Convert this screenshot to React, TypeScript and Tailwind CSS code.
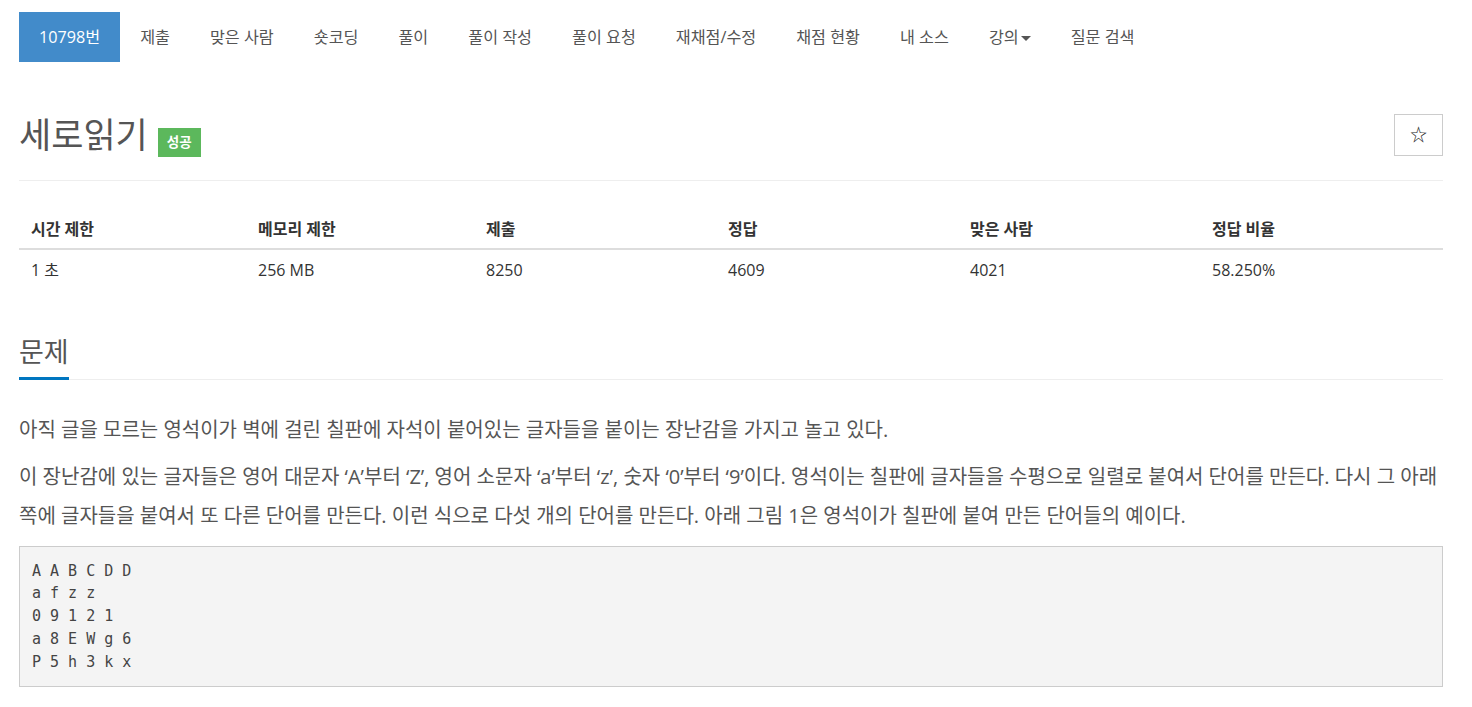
import React from 'react';

const tabs = ['제출', '맞은 사람', '숏코딩', '풀이', '풀이 작성', '풀이 요청', '재채점/수정', '채점 현황', '내 소스'];

const stats = [
  { label: '시간 제한', value: '1 초', w: 'w-[227px]' },
  { label: '메모리 제한', value: '256 MB', w: 'w-[228px]' },
  { label: '제출', value: '8250', w: 'w-[242px]' },
  { label: '정답', value: '4609', w: 'w-[242px]' },
  { label: '맞은 사람', value: '4021', w: 'w-[242px]' },
  { label: '정답 비율', value: '58.250%', w: 'flex-1' },
];

const board = ['A A B C D D', 'a f z z', '0 9 1 2 1', 'a 8 E W g 6', 'P 5 h 3 k x'];

export default function App() {
  return (
    <div className="min-h-screen bg-white text-[#555] font-['Open_Sans','Noto_Sans_CJK_KR',sans-serif]">
      <div className="ml-[19px] w-[1424px]">
        {/* Problem menu */}
        <ul className="mt-[12px] flex h-[50px] text-[16.2px]">
          <li className="flex items-center bg-[#428bca] px-5 text-white">10798번</li>
          {tabs.map((t) => (
            <li key={t} className="flex items-center px-5">{t}</li>
          ))}
          <li className="flex items-center px-5">
            강의
            <span className="ml-[2px] mt-[2px] border-x-[5px] border-t-[5px] border-x-transparent border-t-[#555]" />
          </li>
          <li className="flex items-center px-5">질문 검색</li>
        </ul>

        {/* Title */}
        <div className="mt-[51px] flex items-center justify-between border-b border-[#eee] pb-[23px]">
          <div className="flex items-center">
            <h1 className="text-[35px] leading-[42px] text-[#555]">세로읽기</h1>
            <span className="ml-[10px] mt-[15px] flex h-[29px] items-center bg-[#5cb85c] px-[9px] text-[13.5px] font-bold text-white">
              성공
            </span>
          </div>
          <button className="flex h-[42px] w-[49px] items-center justify-center border border-[#ccc] bg-white text-[17px] text-[#222]">
            ☆
          </button>
        </div>

        {/* Limits table */}
        <div className="mt-[27px] text-[16px]">
          <div className="flex h-[42px] items-center border-b-2 border-[#ddd] pt-[1px] font-bold text-[#333]">
            {stats.map((s) => (
              <div key={s.label} className={`${s.w} px-3`}>{s.label}</div>
            ))}
          </div>
          <div className="flex h-[39px] items-center text-[#333]">
            {stats.map((s) => (
              <div key={s.label} className={`${s.w} px-3`}>{s.value}</div>
            ))}
          </div>
        </div>

        {/* Problem section */}
        <div className="mt-[45px] border-b border-[#eee]">
          <h2 className="mb-[-1px] inline-block border-b-[3px] border-[#0076c0] pb-[7px] text-[27px] leading-[36px] text-[#555]">
            문제
          </h2>
        </div>

        <div className="mt-[30px] text-[20px] leading-[39px]">
          <p className="mb-[8px]">아직 글을 모르는 영석이가 벽에 걸린 칠판에 자석이 붙어있는 글자들을 붙이는 장난감을 가지고 놀고 있다.</p>
          <p className="mb-[11px]">
            이 장난감에 있는 글자들은 영어 대문자 ‘A’부터 ‘Z’, 영어 소문자 ‘a’부터 ‘z’, 숫자 ‘0’부터 ‘9’이다. 영석이는 칠판에 글자들을 수평으로 일렬로 붙여서 단어를 만든다. 다시 그 아래 쪽에 글자들을 붙여서 또 다른 단어를 만든다. 이런 식으로 다섯 개의 단어를 만든다. 아래 그림 1은 영석이가 칠판에 붙여 만든 단어들의 예이다.
          </p>
        </div>

        <pre className="border border-[#ccc] bg-[#f4f4f4] px-3 py-[12.5px] font-['DejaVu_Sans_Mono',monospace] text-[15px] leading-[22.75px] text-[#444]">
          {board.join('\n')}
        </pre>
      </div>
    </div>
  );
}
